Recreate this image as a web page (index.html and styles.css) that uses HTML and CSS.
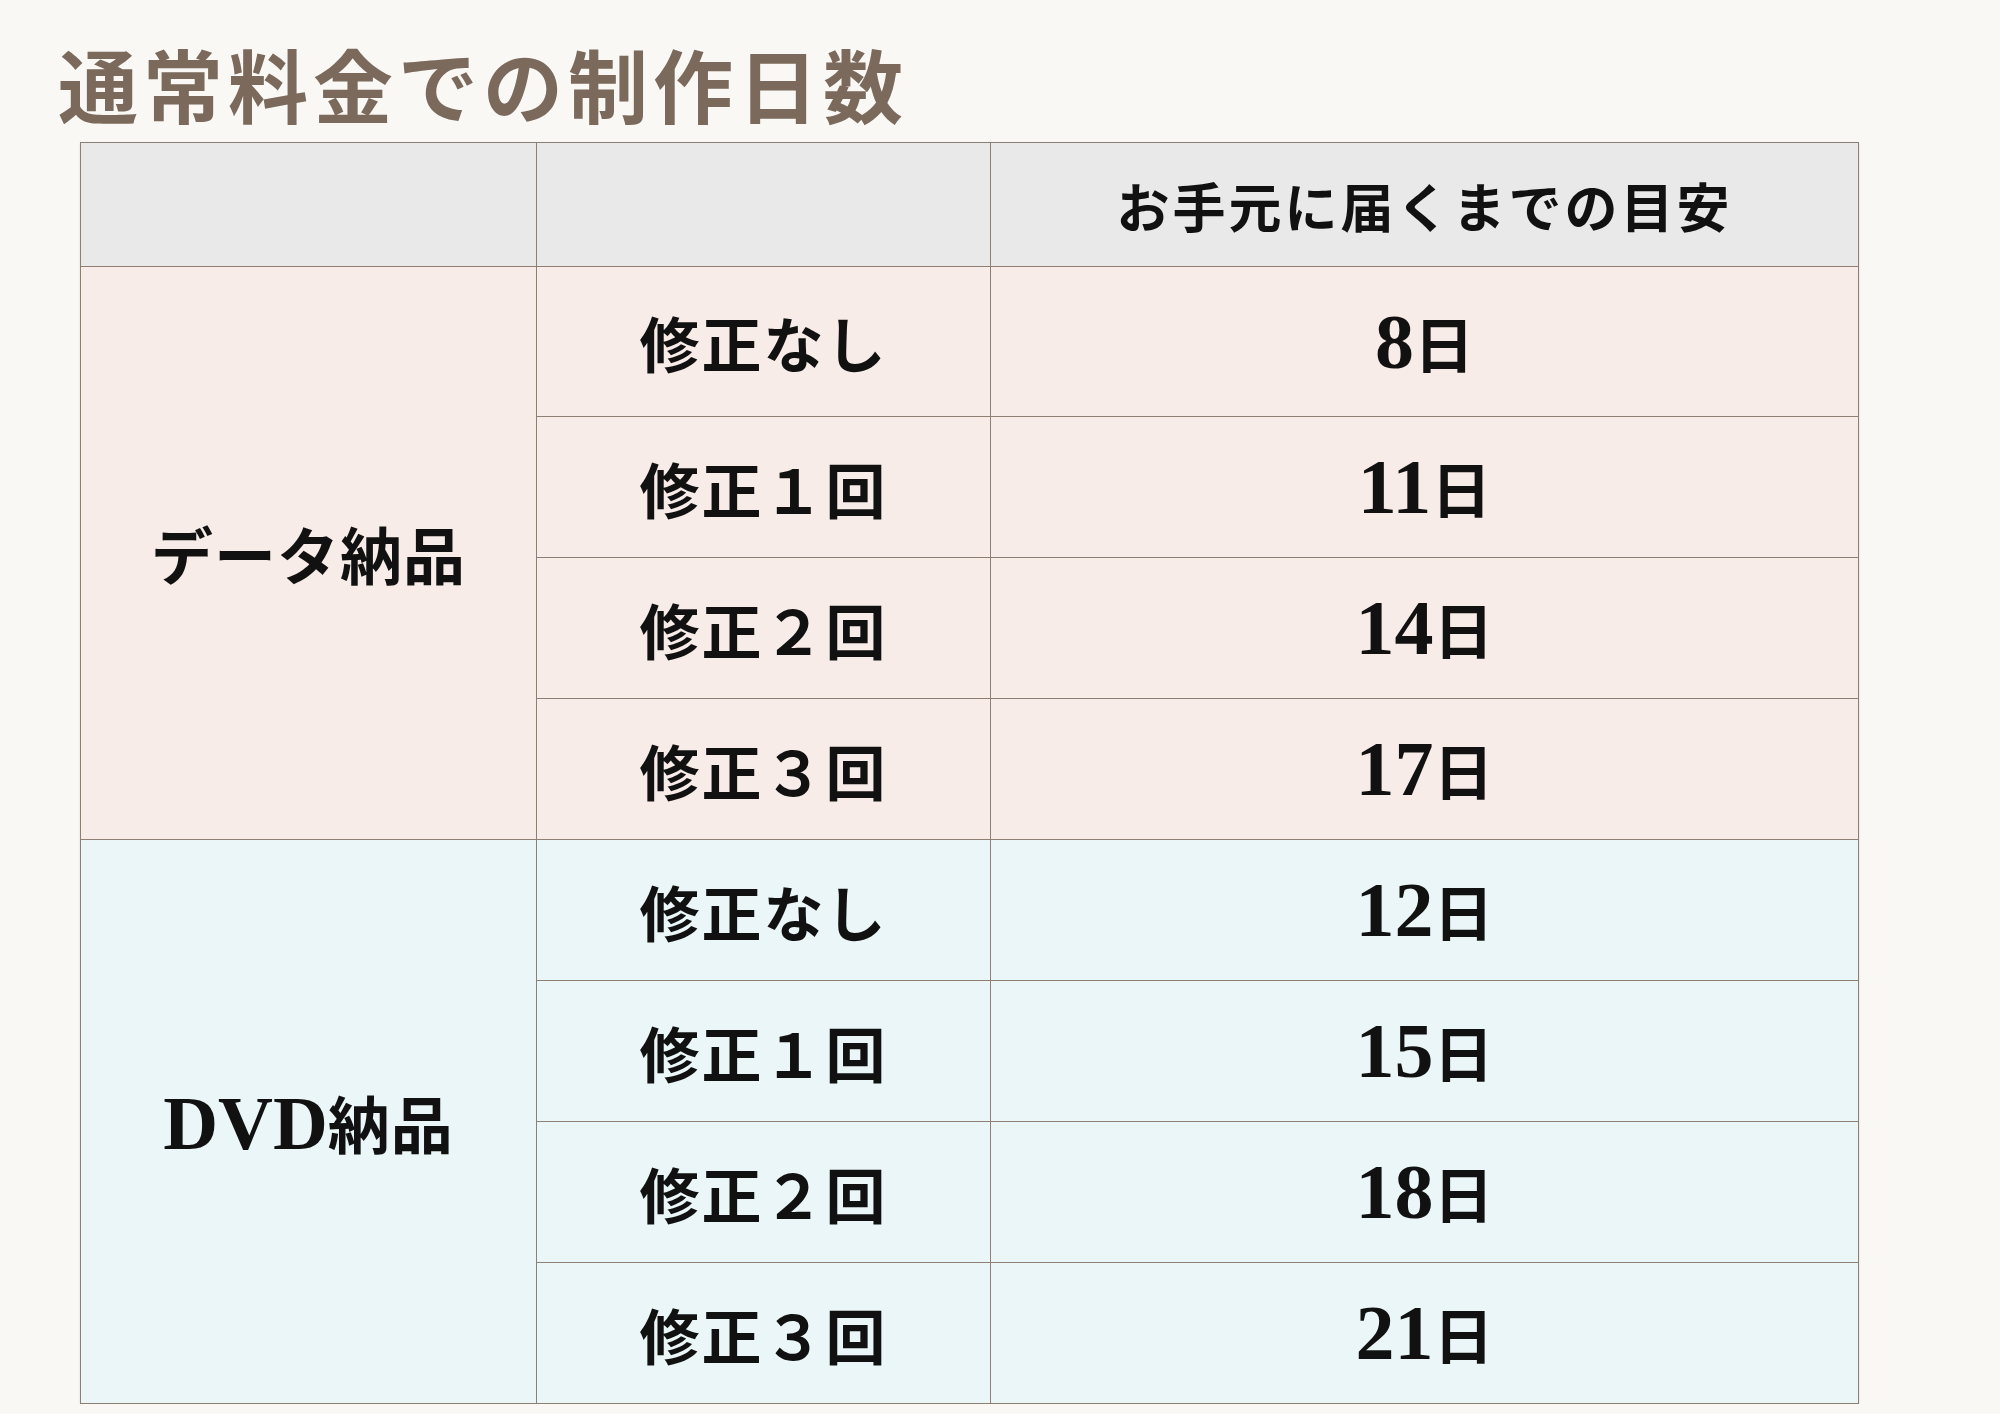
FILE: index.html
```html
<!DOCTYPE html>
<html lang="ja">
<head>
<meta charset="utf-8">
<title>通常料金での制作日数</title>
<link rel="stylesheet" href="styles.css">
</head>
<body>
<main class="page">
  <h1 class="title">通常料金での制作日数</h1>
  <table class="days">
    <colgroup>
      <col class="c-type">
      <col class="c-rev">
      <col class="c-days">
    </colgroup>
    <thead>
      <tr class="head">
        <th></th>
        <th></th>
        <th class="head-label">お手元に届くまでの目安</th>
      </tr>
    </thead>
    <tbody class="data">
      <tr class="first">
        <th class="type" rowspan="4">データ納品</th>
        <td class="rev">修正なし</td>
        <td class="num"><span class="n">8</span><span class="unit">日</span></td>
      </tr>
      <tr>
        <td class="rev">修正１回</td>
        <td class="num"><span class="n">11</span><span class="unit">日</span></td>
      </tr>
      <tr>
        <td class="rev">修正２回</td>
        <td class="num"><span class="n">14</span><span class="unit">日</span></td>
      </tr>
      <tr>
        <td class="rev">修正３回</td>
        <td class="num"><span class="n">17</span><span class="unit">日</span></td>
      </tr>
    </tbody>
    <tbody class="dvd">
      <tr>
        <th class="type" rowspan="4"><span class="latin">DVD</span>納品</th>
        <td class="rev">修正なし</td>
        <td class="num"><span class="n">12</span><span class="unit">日</span></td>
      </tr>
      <tr>
        <td class="rev">修正１回</td>
        <td class="num"><span class="n">15</span><span class="unit">日</span></td>
      </tr>
      <tr>
        <td class="rev">修正２回</td>
        <td class="num"><span class="n">18</span><span class="unit">日</span></td>
      </tr>
      <tr>
        <td class="rev">修正３回</td>
        <td class="num"><span class="n">21</span><span class="unit">日</span></td>
      </tr>
    </tbody>
  </table>
</main>
</body>
</html>
```
FILE: styles.css
```css
html, body {
  margin: 0;
  padding: 0;
  background: #f9f8f5;
}

body {
  font-family: "Liberation Serif", "Noto Sans CJK JP", serif;
  color: #111;
}

.page {
  padding: 34px 0 0 58px;
}

.title {
  margin: 0;
  font-family: "Noto Sans CJK JP", sans-serif;
  font-size: 80px;
  line-height: 96px;
  font-weight: 700;
  letter-spacing: 5px;
  color: #7b6a5c;
}

.days {
  margin: 12px 0 0 22px;
  width: 1778px;
  border-collapse: collapse;
  table-layout: fixed;
  box-shadow: 0 1px 2px rgba(0, 0, 0, 0.12);
}

.c-type { width: 456px; }
.c-rev { width: 454px; }
.c-days { width: 868px; }

.days th,
.days td {
  border: 1px solid #8f7f73;
  padding: 0;
  text-align: center;
  vertical-align: middle;
  font-weight: 700;
}

.head th {
  background: #e9e9e9;
  height: 123px;
}

.head-label {
  font-family: "Noto Sans CJK JP", sans-serif;
  font-size: 53px;
  letter-spacing: 3px;
}

.data th,
.data td {
  background: #f7ece8;
}

.dvd th,
.dvd td {
  background: #eaf6f7;
}

.days tbody tr td {
  height: 140px;
}

.days tbody tr.first td {
  height: 149px;
}

.type {
  font-family: "Noto Sans CJK JP", sans-serif;
  font-size: 62px;
  letter-spacing: 1px;
}

.latin {
  font-family: "Liberation Serif", serif;
  font-size: 76px;
  letter-spacing: 0;
}

.rev {
  font-family: "Noto Sans CJK JP", sans-serif;
  font-size: 60px;
  letter-spacing: 2px;
}

.num {
  line-height: 1;
}

.n {
  font-family: "Liberation Serif", serif;
  font-size: 78px;
}

.unit {
  font-family: "Noto Sans CJK JP", sans-serif;
  font-size: 60px;
}
```
